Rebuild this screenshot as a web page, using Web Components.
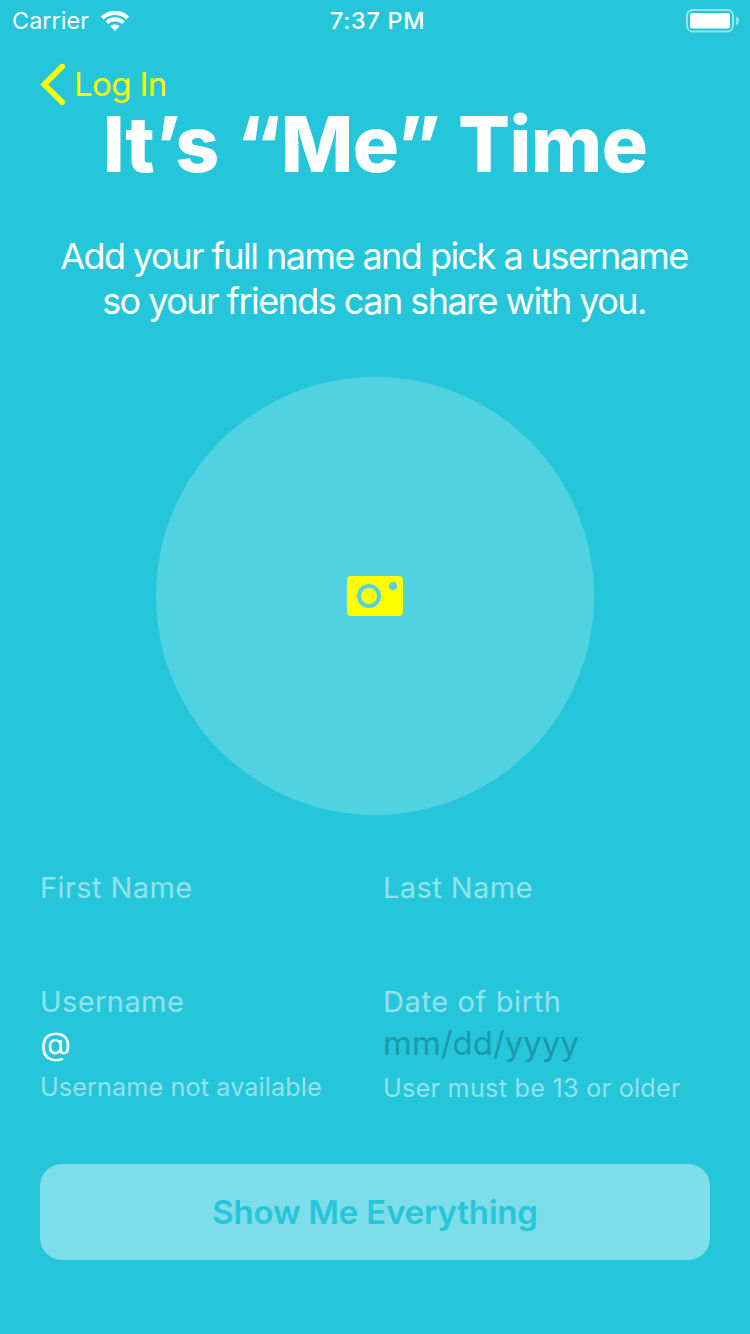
<!DOCTYPE html>
<html lang="en">
<head>
<meta charset="utf-8">
<title>Sign up</title>
<style>
  html, body { margin: 0; background: #26c6da; }
  body { font-family: Inter, "Liberation Sans", sans-serif; color: #fff; }
</style>
</head>
<body>
<signup-screen></signup-screen>

<template id="status-bar">
  <style>
    :host { display: grid; grid-template-columns: 330px 1fr auto; align-items: center; height: 41px; padding: 0 10px 0 12px; box-sizing: border-box; font-size: 23.3px; line-height: 41px; }
    .left { display: flex; align-items: center; gap: 12px; }
    .carrier { letter-spacing: .12px; }
    .time { font-weight: 500; letter-spacing: .75px; margin-left: -12px; }
    svg { display: block; }
  </style>
  <div class="left">
    <span class="carrier"><slot name="carrier"></slot></span>
    <svg width="28" height="20" viewBox="0 0 28 20" fill="none" stroke="#fff">
      <path d="M1.3 7.1C8.2 .2 19.8 .2 26.7 7.1" stroke-width="4.1"/>
      <path d="M5.7 11.6C10.300 7.200 17.700 7.200 22.300 11.600" stroke-width="4"/>
      <path d="M14 20L9.300 15.300C12 12.800 16 12.800 18.700 15.300Z" fill="#fff" stroke="none"/>
    </svg>
  </div>
  <span class="time"><slot name="time"></slot></span>
  <svg width="54" height="24" viewBox="0 0 54 24">
    <rect x="1" y="1" width="46" height="21.500" rx="5.500" fill="none" stroke="#fff" stroke-opacity=".5" stroke-width="2"/>
    <rect x="4" y="4" width="40" height="15.500" rx="2.500" fill="#fff"/>
    <path d="M50 7.500C52.300 8.500 53 10 53 11.800S52.300 15 50 16Z" fill="#fff" fill-opacity=".5"/>
  </svg>
</template>

<template id="back-link">
  <style>
    :host { display: flex; align-items: center; height: 86px; padding-left: 40px; color: #ff0; font-size: 33px; letter-spacing: -.62px; }
    svg { display: block; margin-right: 8px; }
  </style>
  <svg width="26" height="42" viewBox="0 0 26 42" fill="none" stroke="#ff0" stroke-width="5.6" stroke-linecap="round" stroke-linejoin="miter">
    <path d="M22.200 3.600L4.300 21.500L22.200 39.300"/>
  </svg>
  <span><slot></slot></span>
</template>

<template id="screen-heading">
  <style>
    :host { display: block; margin-top: -29px; text-align: center; }
    h1 { margin: 0; font-size: 77px; line-height: 92px; font-weight: 800; letter-spacing: -.55px; word-spacing: 1.5px; }
    p { margin: 44px 0 0 -2px; font-size: 36px; line-height: 45px; letter-spacing: -1.54px; white-space: nowrap; }
    ::slotted(span) { display: block; }
  </style>
  <h1><slot name="title"></slot></h1>
  <p><slot></slot></p>
</template>

<template id="photo-picker">
  <style>
    :host { display: flex; align-items: center; justify-content: center; width: 438px; height: 438px; margin: 53px auto 0; border-radius: 50%; background: #51d2e1; }
  </style>
  <svg width="56" height="40" viewBox="0 0 56 40">
    <rect width="56" height="40" rx="4" fill="#ff0"/>
    <circle cx="22" cy="20" r="10" fill="none" stroke="#51d2e1" stroke-width="4"/>
    <circle cx="46" cy="10" r="4" fill="#51d2e1"/>
  </svg>
</template>

<template id="form-field">
  <style>
    :host { display: grid; grid-template-rows: 36px 43px 32px; white-space: nowrap; align-content: start; }
    .label { font-size: 29px; line-height: 36px; letter-spacing: var(--label-spacing, .42px); color: rgba(255,255,255,.5); }
    .value { font-size: 33px; line-height: 44px; padding-top: 1px; }
    .help { font-size: 25.2px; line-height: 32px; padding-top: var(--help-gap, 8px); letter-spacing: var(--help-spacing, .115px); color: rgba(255,255,255,.5); }
    ::slotted(.hint) { color: #1c9aad; letter-spacing: -.03px; }
    ::slotted(.prefix) { font-size: 32px; font-weight: 400; }
  </style>
  <div class="label"><slot name="label"></slot></div>
  <div class="value"><slot></slot></div>
  <div class="help"><slot name="help"></slot></div>
</template>

<template id="submit-button">
  <style>
    :host { display: block; margin: 60px 40px 0; }
    button { display: block; width: 100%; height: 96px; padding: 0; border: 0; border-radius: 22px; background: #7ddde9; color: #26c6da; font: 600 33px/96px Inter, "Liberation Sans", sans-serif; letter-spacing: -.17px; }
  </style>
  <button type="button"><slot></slot></button>
</template>

<template id="signup-screen">
  <style>
    :host { display: block; width: 750px; height: 1334px; overflow: hidden; background: #26c6da; }
    form { display: grid; grid-template-columns: 343px 1fr; grid-template-rows: 114px 120px; margin: 55px 0 0; padding-left: 40px; }
    .dob { --label-spacing: .62px; --help-spacing: .264px; --help-gap: 9px; }
  </style>
  <status-bar><span slot="carrier">Carrier</span><span slot="time">7:37 PM</span></status-bar>
  <back-link>Log In</back-link>
  <screen-heading>
    <span slot="title">It’s “Me” Time</span>
    <span>Add your full name and pick a username</span>
    <span>so your friends can share with you.</span>
  </screen-heading>
  <photo-picker></photo-picker>
  <form>
    <form-field><span slot="label">First Name</span></form-field>
    <form-field><span slot="label">Last Name</span></form-field>
    <form-field><span slot="label">Username</span><span class="prefix">@</span><span slot="help">Username not available</span></form-field>
    <form-field class="dob"><span slot="label">Date of birth</span><span class="hint">mm/dd/yyyy</span><span slot="help">User must be 13 or older</span></form-field>
  </form>
  <submit-button>Show Me Everything</submit-button>
</template>

<script>
  for (const name of ["status-bar", "back-link", "screen-heading", "photo-picker", "form-field", "submit-button", "signup-screen"]) {
    customElements.define(name, class extends HTMLElement {
      constructor() {
        super();
        this.attachShadow({ mode: "open" }).append(document.getElementById(name).content.cloneNode(true));
      }
    });
  }
</script>
</body>
</html>
